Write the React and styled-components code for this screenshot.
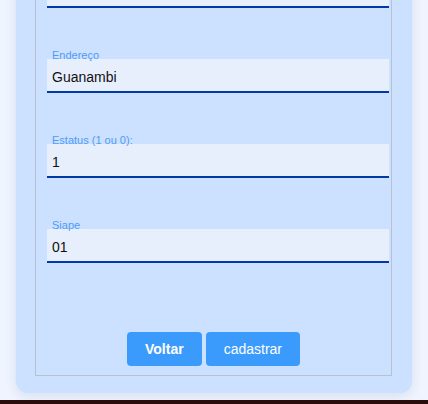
import React from "react";
import styled, { createGlobalStyle } from "styled-components";

const GlobalStyle = createGlobalStyle`
  html, body {
    margin: 0;
    padding: 0;
    background: #2a0c0c;
    font-family: "Liberation Sans", Arial, sans-serif;
  }
`;

const Page = styled.div`
  height: 400px;
  overflow: hidden;
  background: #eff4fe;
  padding: 0 16px;
  box-sizing: border-box;
`;

const Card = styled.div`
  margin-top: -60px;
  background: #cce0ff;
  border-radius: 12px;
  padding: 18px 20px 17px 19px;
  box-shadow: 0 3px 12px rgba(40, 70, 130, 0.12);
`;

const Fieldset = styled.fieldset`
  margin: 0;
  min-width: 0;
  border: 1px solid #b9c1cc;
  padding: 15px 2px 9px 2px;
  display: flex;
  flex-direction: column;
  gap: 51px;
`;

const Field = styled.div`
  position: relative;
  margin-left: 9px;
`;

const Label = styled.label`
  position: absolute;
  top: -10px;
  left: 5px;
  font-size: 11px;
  line-height: 13px;
  color: #4d9cf7;
`;

const Input = styled.input`
  display: block;
  width: 100%;
  box-sizing: border-box;
  height: 34px;
  border: none;
  border-bottom: 2px solid #0039a6;
  background: #e8effc;
  padding: 4px 5px 0;
  font-family: "Liberation Sans", Arial, sans-serif;
  font-size: 14px;
  color: #111;
  outline: none;
`;

const Actions = styled.div`
  display: flex;
  justify-content: center;
  gap: 4px;
  margin-top: 18px;
`;

const Button = styled.button`
  height: 34px;
  padding: 0 18px;
  border: none;
  border-radius: 4px;
  background: #3a9bfd;
  color: #fff;
  font-family: "Liberation Sans", Arial, sans-serif;
  font-size: 14px;
  font-weight: ${p => (p.$bold ? 700 : 400)};
  cursor: pointer;
`;

const fields = [
  { label: "Telefone", value: "" },
  { label: "Endereço", value: "Guanambi" },
  { label: "Estatus (1 ou 0):", value: "1" },
  { label: "Siape", value: "01" }
];

export default function App() {
  return (
    <Page>
      <GlobalStyle />
      <Card>
        <Fieldset>
          {fields.map(f => (
            <Field key={f.label}>
              <Label>{f.label}</Label>
              <Input defaultValue={f.value} />
            </Field>
          ))}
          <Actions>
            <Button $bold>Voltar</Button>
            <Button>cadastrar</Button>
          </Actions>
        </Fieldset>
      </Card>
    </Page>
  );
}
